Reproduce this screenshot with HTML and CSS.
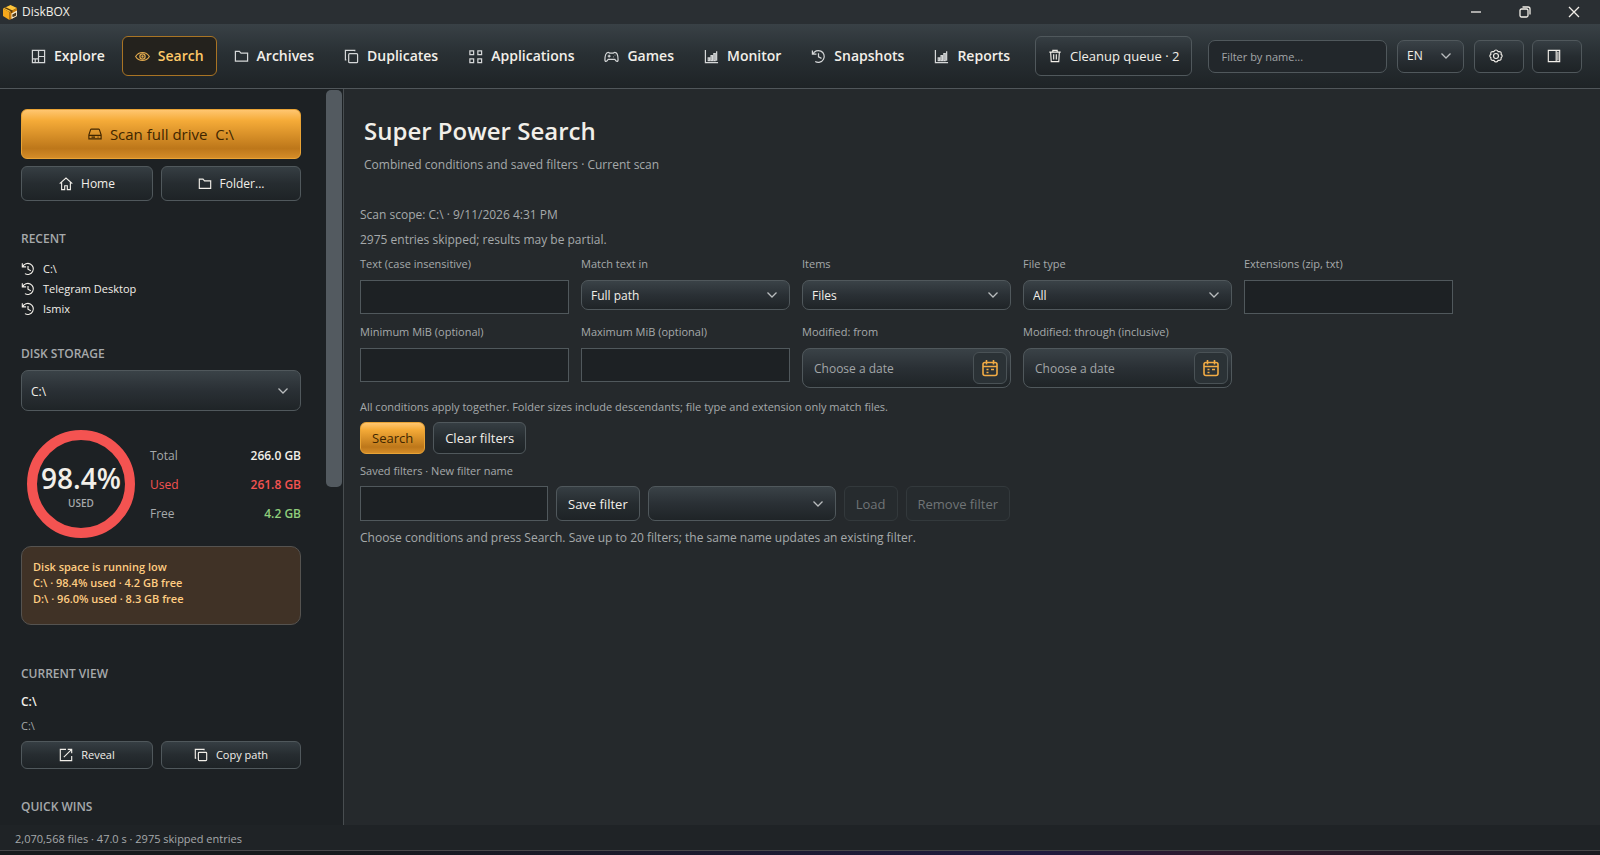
FILE: index.html
```html
<!DOCTYPE html>
<html lang="en">
<head>
<meta charset="UTF-8">
<meta name="viewport" content="width=device-width, initial-scale=1.0">
<title>DiskBOX</title>
<link rel="stylesheet" href="styles.css">
</head>
<body>

<!-- Shared icons -->
<svg class="sprite" aria-hidden="true">
  <symbol id="i-folder" viewBox="0 0 16 16"><path d="M1.500 13V2.500h4.200l1.800 2h7V13z"/></symbol>
  <symbol id="i-copy" viewBox="0 0 16 16"><rect x="5" y="5" width="9.500" height="9.500" rx="1"/><path d="M2.500 11.500h-1v-10h10v1"/></symbol>
  <symbol id="i-history" viewBox="0 0 16 16"><path d="M2 5.500A6.300 6.300 0 1 1 4.500 13.300M1.500 1.500v4H5.800M8 4.500V8.300l3.200 1.700"/></symbol>
  <symbol id="i-chart" viewBox="0 0 16 16"><path d="M1.500 1v13.500H15M4.500 12.500V9.500h1.500v3zM7.500 12.500V7h1.500v5.500zM10.500 12.500V5H12v7.500zM13.500 12.500V2.500"/></symbol>
  <symbol id="i-chevron" viewBox="0 0 12 12"><path d="M1.500 3.500L6 8l4.500-4.500"/></symbol>
  <symbol id="i-calendar" viewBox="0 0 18 18"><rect x="2" y="3.500" width="14" height="13" rx="2"/><path d="M2 7.500h14M5.500 1v4.500M12.500 1v4.500M5.500 10.500h2M10 10.500h3M5.500 13.500h2"/></symbol>
</svg>

<div class="titlebar">
  <svg class="logo" viewBox="0 0 16 16">
    <path d="M1 4.500L8.500 1 15 4 7.500 8z" fill="#ffc53a"/>
    <path d="M1 4.500L7.500 8v8L1 12z" fill="#f5a81c"/>
    <path d="M7.500 8L15 4v8l-7.500 4z" fill="#c97d0c"/>
    <path d="M3.700 3.200l6.800 3.300v1.800l-1.600.9V7.300L2.200 4z" fill="#5c3a0a"/>
    <path d="M9.500 9.500L15 6.500V12l-5.500 3z" fill="#f7ead0"/>
    <path d="M11 12.800v-2l2.500-1.300v1.700L11 12.500" fill="none" stroke="#4a3416"/>
  </svg>
  <span class="app-name">DiskBOX</span>
  <div class="window-buttons">
    <button aria-label="Minimize"><svg viewBox="0 0 12 12"><path d="M1 6h10"/></svg></button>
    <button aria-label="Restore"><svg viewBox="0 0 12 12"><rect x="1" y="3" width="8" height="8" rx="1.500"/><path d="M3.500 1H9a2 2 0 0 1 2 2v5.500"/></svg></button>
    <button aria-label="Close"><svg viewBox="0 0 12 12"><path d="M1 1l10 10M11 1L1 11"/></svg></button>
  </div>
</div>

<header class="toolbar">
  <nav class="tabs">
    <a href="#"><svg viewBox="0 0 16 16"><path d="M1.500 1.500h13v13h-13zM8 1.500v13M1.500 10.500H8M8 8h6.500M4.500 10.500v4"/></svg>Explore</a>
    <a href="#" class="active"><svg viewBox="0 0 16 16"><path d="M.7 8c3.500-5.700 11.100-5.700 14.600 0-3.500 5.700-11.100 5.700-14.600 0z"/><circle cx="8" cy="8" r="2.800"/><circle cx="8" cy="8" r=".6"/></svg>Search</a>
    <a href="#"><svg><use href="#i-folder"/></svg>Archives</a>
    <a href="#"><svg><use href="#i-copy"/></svg>Duplicates</a>
    <a href="#"><svg viewBox="0 0 16 16"><path d="M2 2h4v4H2zM10.500 2h4v4h-4zM2 10.500h4v4H2zM10.500 10.500h4v4h-4z"/></svg>Applications</a>
    <a href="#"><svg viewBox="0 0 16 16"><path d="M4.500 3.500C2 3.500 1 8 1 11.500c0 2.500 2 2.500 3.500-.5h7c1.500 3 3.500 3 3.500.5 0-3.500-1-8-3.500-8-1 0-1 1-2 1h-3c-1 0-1-1-2-1zM5.500 6v3M4 7.500h3M10 8.500h.5M11.500 6.500h.5"/></svg>Games</a>
    <a href="#"><svg><use href="#i-chart"/></svg>Monitor</a>
    <a href="#"><svg><use href="#i-history"/></svg>Snapshots</a>
    <a href="#"><svg><use href="#i-chart"/></svg>Reports</a>
  </nav>
  <button class="btn cleanup"><svg viewBox="0 0 16 16"><path d="M1.500 3.500h13M5.500 3.500v-2h5v2M3 3.500l.7 11h8.600l.7-11M6.500 6v6M9.500 6v6"/></svg>Cleanup queue · 2</button>
  <input class="filter" type="text" aria-label="Filter by name" placeholder="Filter by name...">
  <div class="select lang">
    <select aria-label="Language"><option>EN</option></select>
    <svg class="chevron"><use href="#i-chevron"/></svg>
  </div>
  <div class="tools">
    <button class="btn" aria-label="Settings"><svg viewBox="0 0 16 16"><path d="M5.500 3Q8-.8 10.500 3q4.500-.5 3.300 3 2.500 2 0 4 .7 3.500-3.300 3Q8 16.800 5.500 13q-4 .5-3.300-3-2.500-2 0-4Q1 2.500 5.500 3z"/><circle cx="8" cy="8" r="2.800"/></svg></button>
    <button class="btn" aria-label="Toggle panel"><svg viewBox="0 0 16 16"><path d="M1.500 1.500h13v13h-13zM10.500 1.500v13M12.500 3v10"/></svg></button>
  </div>
</header>

<div class="workspace">
  <aside class="sidebar">
    <button class="btn primary scan"><svg viewBox="0 0 16 16"><path d="M1 9l2-6q.2-.5 1-.5h8q.8 0 1 .5l2 6v4.500H1zM1 9.500h14M4 11.500h4M11 11.500h1"/></svg>Scan full drive&nbsp; C:\</button>
    <div class="pair">
      <button class="btn"><svg viewBox="0 0 16 16"><path d="M.8 7.500L8 1.200l7.200 6.300M3 6v8.500h3.500V10h3v4.500H13V6"/></svg>Home</button>
      <button class="btn"><svg><use href="#i-folder"/></svg>Folder...</button>
    </div>

    <h2>RECENT</h2>
    <ul class="recent">
      <li><a href="#"><svg><use href="#i-history"/></svg>C:\</a></li>
      <li><a href="#"><svg><use href="#i-history"/></svg>Telegram Desktop</a></li>
      <li><a href="#"><svg><use href="#i-history"/></svg>Ismix</a></li>
    </ul>

    <h2>DISK STORAGE</h2>
    <div class="select drive">
      <select aria-label="Drive"><option>C:\</option></select>
      <svg class="chevron"><use href="#i-chevron"/></svg>
    </div>

    <div class="usage">
      <div class="ring"><strong>98.4%</strong><span>USED</span></div>
      <dl>
        <div><dt>Total</dt><dd>266.0 GB</dd></div>
        <div class="used"><dt>Used</dt><dd>261.8 GB</dd></div>
        <div class="free"><dt>Free</dt><dd>4.2 GB</dd></div>
      </dl>
    </div>
    <div class="warning">
      <p>Disk space is running low</p>
      <p>C:\ · 98.4% used · 4.2 GB free</p>
      <p>D:\ · 96.0% used · 8.3 GB free</p>
    </div>

    <h2>CURRENT VIEW</h2>
    <p class="view-name">C:\</p>
    <p class="view-path">C:\</p>
    <div class="pair small">
      <button class="btn"><svg viewBox="0 0 16 16"><path d="M8 1.500H1.500v13h13V9M5.500 10.500l9-9M10 1.500h4.500V6"/></svg>Reveal</button>
      <button class="btn"><svg><use href="#i-copy"/></svg>Copy path</button>
    </div>

    <h2>QUICK WINS</h2>
  </aside>
  <div class="scrollbar"><div class="thumb"></div></div>

  <main class="content">
    <h1>Super Power Search</h1>
    <p class="subtitle">Combined conditions and saved filters · Current scan</p>

    <p class="line">Scan scope: C:\ · 9/11/2026 4:31 PM</p>
    <p class="line">2975 entries skipped; results may be partial.</p>

    <form class="search-form">
      <div class="fields">
        <div class="field">
          <label for="text">Text (case insensitive)</label>
          <input type="text" id="text">
        </div>
        <div class="field">
          <label for="match">Match text in</label>
          <div class="select"><select id="match"><option>Full path</option></select><svg class="chevron"><use href="#i-chevron"/></svg></div>
        </div>
        <div class="field">
          <label for="items">Items</label>
          <div class="select"><select id="items"><option>Files</option></select><svg class="chevron"><use href="#i-chevron"/></svg></div>
        </div>
        <div class="field">
          <label for="type">File type</label>
          <div class="select"><select id="type"><option>All</option></select><svg class="chevron"><use href="#i-chevron"/></svg></div>
        </div>
        <div class="field">
          <label for="ext">Extensions (zip, txt)</label>
          <input type="text" id="ext">
        </div>
        <div class="field">
          <label for="min">Minimum MiB (optional)</label>
          <input type="text" id="min">
        </div>
        <div class="field">
          <label for="max">Maximum MiB (optional)</label>
          <input type="text" id="max">
        </div>
        <div class="field">
          <label for="from">Modified: from</label>
          <div class="date"><input type="text" id="from" placeholder="Choose a date"><button type="button" aria-label="Open calendar"><svg><use href="#i-calendar"/></svg></button></div>
        </div>
        <div class="field">
          <label for="through">Modified: through (inclusive)</label>
          <div class="date"><input type="text" id="through" placeholder="Choose a date"><button type="button" aria-label="Open calendar"><svg><use href="#i-calendar"/></svg></button></div>
        </div>
      </div>

      <p class="hint">All conditions apply together. Folder sizes include descendants; file type and extension only match files.</p>
      <div class="row">
        <button type="button" class="btn primary">Search</button>
        <button type="button" class="btn">Clear filters</button>
      </div>

      <label class="saved-label" for="filter-name">Saved filters · New filter name</label>
      <div class="row saved">
        <input type="text" id="filter-name">
        <button type="button" class="btn">Save filter</button>
        <div class="select"><select aria-label="Saved filter"><option></option></select><svg class="chevron"><use href="#i-chevron"/></svg></div>
        <button type="button" class="btn" disabled>Load</button>
        <button type="button" class="btn" disabled>Remove filter</button>
      </div>
      <p class="line note">Choose conditions and press Search. Save up to 20 filters; the same name updates an existing filter.</p>
    </form>
  </main>
</div>

<footer class="status">2,070,568 files · 47.0 s · 2975 skipped entries</footer>
<div class="desktop-edge"></div>

</body>
</html>
```

FILE: styles.css
```css
* {
  box-sizing: border-box;
}

body {
  margin: 0;
  height: 100vh;
  display: flex;
  flex-direction: column;
  overflow: hidden;
  background: #1d2124;
  color: #f2efe9;
  font-family: "Segoe UI", "Open Sans", "Noto Sans", sans-serif;
  font-size: 12px;
  line-height: 16px;
}

h1, h2, p, ul, dl, dd {
  margin: 0;
  padding: 0;
}

button, input, select {
  font: inherit;
  color: inherit;
}

a {
  color: inherit;
  text-decoration: none;
}

svg {
  width: 16px;
  height: 16px;
  flex: none;
  fill: none;
  stroke: currentColor;
  stroke-width: 1.3;
}

.sprite {
  display: none;
}

/* Title bar */
.titlebar {
  display: flex;
  align-items: center;
  height: 24px;
  flex: none;
  padding: 0 2px;
  background: #2a2f33;
}

.logo {
  stroke: none;
}

.app-name {
  margin-left: 4px;
}

.window-buttons {
  display: flex;
  margin-left: auto;
}

.window-buttons button {
  display: flex;
  align-items: center;
  justify-content: center;
  width: 49px;
  height: 24px;
  padding: 0;
  border: none;
  background: none;
}

.window-buttons svg {
  width: 12px;
  height: 12px;
}

/* Toolbar */
.toolbar {
  display: flex;
  align-items: center;
  height: 65px;
  flex: none;
  padding: 0 18px;
  background: linear-gradient(#394146, #293034 45%, #1e2326);
  border-bottom: 1px solid #50565a;
}

.tabs {
  display: flex;
  gap: 4px;
}

.tabs a {
  display: flex;
  align-items: center;
  gap: 8px;
  height: 40px;
  padding: 0 12px;
  border: 1px solid transparent;
  border-radius: 6px;
  font-size: 14px;
  font-weight: 600;
}

.tabs svg {
  width: 15px;
  height: 15px;
  color: #d5d7d8;
}

.tabs .active {
  background: #24221d;
  border-color: #a97424;
  color: #ffc968;
}

.tabs .active svg {
  color: #e0a94e;
}

.btn {
  display: flex;
  align-items: center;
  justify-content: center;
  gap: 8px;
  padding: 0 12px;
  border: 1px solid #50585c;
  border-radius: 6px;
  background: linear-gradient(#363e43, #262c30 50%, #1e2326);
  white-space: nowrap;
}

.btn:disabled {
  background: #262b2e;
  border-color: #33393c;
  color: #707476;
}

.primary {
  background: linear-gradient(#ffc670, #f5ab38 22%, #bd771a 80%, #d48c28);
  border-color: #e9a335;
  color: #402600;
}

.cleanup {
  height: 40px;
  margin-left: 12px;
  font-size: 13px;
}

.filter {
  flex: 1;
  min-width: 100px;
  height: 33px;
  margin-left: 16px;
  padding: 0 12px;
  border: 1px solid #50585c;
  border-radius: 7px;
  background: #22272b;
  font-size: 11px;
}

::placeholder {
  color: #a3a6a8;
  opacity: 1;
}

.select {
  position: relative;
}

.select select {
  display: block;
  width: 100%;
  height: 30px;
  padding: 2px 32px 0 9px;
  appearance: none;
  border: 1px solid #50585c;
  border-radius: 7px;
  background: linear-gradient(#3a4247, #2a3035 50%, #1f2427);
}

.chevron {
  position: absolute;
  right: 12px;
  top: 50%;
  width: 12px;
  height: 12px;
  margin-top: -6px;
  color: #b9bcbe;
  pointer-events: none;
}

.lang {
  width: 67px;
  margin-left: 10px;
}

.lang select {
  height: 33px;
  padding-top: 0;
}

.tools {
  display: flex;
  gap: 8px;
  margin-left: 10px;
}

.tools .btn {
  width: 50px;
  height: 33px;
  padding-right: 18px;
}

.tools svg,
.cleanup svg {
  width: 14px;
  height: 14px;
}

/* Sidebar */
.workspace {
  display: flex;
  flex: 1;
  min-height: 0;
}

.sidebar {
  width: 326px;
  flex: none;
  padding: 20px 25px 0 21px;
  overflow: hidden;
  background: #1d2124;
}

.scrollbar {
  width: 18px;
  flex: none;
  padding-top: 1px;
  background: #1d2124;
  border-right: 1px solid #484d50;
}

.thumb {
  width: 16px;
  height: 54%;
  border-radius: 5px;
  background: #535a60;
}

.scan {
  width: 100%;
  height: 50px;
  font-size: 15px;
}

.scan svg {
  width: 14px;
  height: 14px;
}

.pair {
  display: grid;
  grid-template-columns: 132px 1fr;
  gap: 8px;
  margin-top: 7px;
}

.pair .btn {
  height: 35px;
}

.pair svg,
.recent svg {
  width: 14px;
  height: 14px;
}

.sidebar h2 {
  margin-top: 30px;
  font-size: 12px;
  font-weight: 600;
  color: #a6a9ab;
}

.recent {
  margin-top: 12px;
  list-style: none;
  font-size: 11px;
}

.recent a {
  display: flex;
  align-items: center;
  gap: 8px;
  height: 20px;
}

.sidebar .recent + h2 {
  margin-top: 27px;
}

.drive {
  margin-top: 8px;
}

.drive select {
  height: 41px;
}

.usage {
  display: flex;
  align-items: center;
  gap: 15px;
  margin: 19px 0 8px;
  padding-left: 6px;
}

.ring {
  display: flex;
  flex-direction: column;
  align-items: center;
  justify-content: center;
  width: 108px;
  height: 108px;
  flex: none;
  padding-top: 4px;
  border: 10px solid #f45351;
  border-radius: 50%;
}

.ring strong {
  font-size: 28px;
  line-height: 34px;
  font-weight: 600;
}

.ring span {
  font-size: 10px;
  font-weight: 600;
  color: #a6a9ab;
}

.usage dl {
  flex: 1;
}

.usage dl div {
  display: flex;
  justify-content: space-between;
  line-height: 29px;
}

.usage dt {
  color: #a6a9ab;
}

.usage dd {
  font-weight: 600;
}

.usage .used dt,
.usage .used dd {
  color: #f45351;
}

.usage .free dd {
  color: #8fce7c;
}

.warning {
  min-height: 79px;
  padding: 12px 11px;
  border: 1px solid #555350;
  border-radius: 10px;
  background: #403226;
  color: #ffcd82;
  font-size: 11px;
  font-weight: 600;
}

.sidebar .warning + h2 {
  margin-top: 41px;
}

.view-name {
  margin-top: 12px;
  font-weight: 600;
}

.view-path {
  margin-top: 8px;
  font-size: 11px;
  color: #a6a9ab;
}

.small .btn {
  height: 28px;
  font-size: 11px;
}

/* Search page */
.content {
  flex: 1;
  min-width: 0;
  padding: 26px 16px 0;
  overflow: auto;
  background: #25292c;
}

.content h1 {
  padding-left: 4px;
  font-size: 24px;
  line-height: 32px;
  font-weight: 600;
}

.subtitle {
  margin: 10px 0 34px;
  padding-left: 4px;
  color: #a6a9ab;
}

.line,
.field label,
.hint,
.saved-label {
  color: #a6a9ab;
}

.line + .line {
  margin-top: 9px;
}

.fields {
  display: grid;
  grid-template-columns: repeat(auto-fill, 209px);
  gap: 10px 12px;
  margin-top: 8px;
}

.field label,
.hint,
.saved-label {
  display: block;
  font-size: 11px;
}

.field label {
  margin-bottom: 8px;
}

.field > input,
.saved > input {
  display: block;
  width: 100%;
  height: 34px;
  padding: 0 8px;
  border: 1px solid #50585c;
  background: #1d2124;
}

.date {
  display: flex;
  align-items: center;
  height: 40px;
  padding: 3px;
  border: 1px solid #50585c;
  border-radius: 8px;
  background: linear-gradient(#3a4247, #2a3035 50%, #1f2427);
}

.date input {
  flex: 1;
  min-width: 0;
  padding: 2px 8px 0;
  border: none;
  background: none;
}

.date button {
  display: flex;
  align-items: center;
  justify-content: center;
  width: 34px;
  height: 32px;
  padding: 0;
  border: 1px solid #4a5256;
  border-radius: 6px;
  background: #2b3236;
  color: #f2ac45;
}

.date svg {
  width: 18px;
  height: 18px;
  stroke-width: 1.6;
}

.hint {
  margin: 11px 0 7px;
}

.row {
  display: flex;
  gap: 8px;
}

.row .btn {
  height: 32px;
  padding: 0 11px;
  font-size: 13px;
}

.saved-label {
  margin: 9px 0 7px;
}

.saved > input,
.saved .select {
  width: 188px;
}

.saved > input,
.saved .select select,
.saved .btn {
  height: 35px;
}

.note {
  margin-top: 9px;
}

/* Status bar */
.status {
  height: 25px;
  flex: none;
  padding: 6px 15px 0;
  background: #1f2326;
  color: #a6a9ab;
  font-size: 11px;
}

.desktop-edge {
  height: 5px;
  flex: none;
  border-top: 1px solid #484649;
  background: linear-gradient(90deg, #17191c 20%, #201a3e 65%, #2e1a2d 76%, #1a1a20);
}
```
